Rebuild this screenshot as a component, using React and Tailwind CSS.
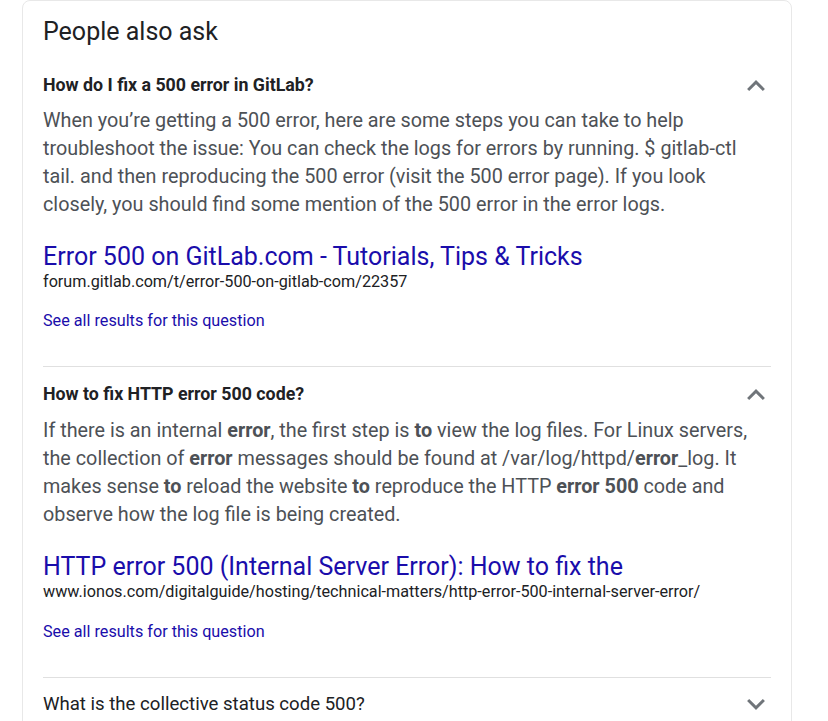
import React from "react";

function Chevron({ up }) {
  return (
    <svg width="18" height="11" viewBox="6 8 12 7.41" className={up ? "" : "rotate-180"}>
      <path d="M12 8l-6 6 1.41 1.41L12 10.83l4.59 4.58L18 14z" fill="#70757a" />
    </svg>
  );
}

function Question({ text, bold, up }) {
  return (
    <div className="flex items-center justify-between h-6">
      <span className={`leading-6 text-[#202124] ${bold ? "font-bold text-[17.8px]" : "font-normal text-[18.6px]"}`}>{text}</span>
      <span className="mr-[6px] flex items-center">
        <Chevron up={up} />
      </span>
    </div>
  );
}

export default function App() {
  const font = { fontFamily: "Roboto, 'Liberation Sans', Arial, sans-serif" };
  return (
    <div className="w-[828px] h-[721px] overflow-hidden bg-white" style={font}>
      <div className="ml-[22px] w-[770px] border border-[#e8e8e8] rounded-[8px] px-5 pt-[15px] pb-6">
        <h2 className="text-[25px] leading-8 text-[#202124] font-normal">People also ask</h2>

        <div className="mt-[25px]">
          <Question text="How do I fix a 500 error in GitLab?" bold up />
          <p className="mt-[10px] text-[19.8px] leading-[28px] text-[#4d5156]">
            When you’re getting a 500 error, here are some steps you can take to help troubleshoot the issue: You can check the logs for errors by running. $ gitlab-ctl tail. and then reproducing the 500 error (visit the 500 error page). If you look closely, you should find some mention of the 500 error in the error logs.
          </p>
          <div className="mt-[22px] text-[25px] leading-[31px] text-[#1a0dab]">Error 500 on GitLab.com - Tutorials, Tips &amp; Tricks</div>
          <div className="text-[16.2px] leading-5 text-[#202124]">forum.gitlab.com/t/error-500-on-gitlab-com/22357</div>
          <div className="mt-[19px] text-[16.2px] leading-5 text-[#1a0dab]">See all results for this question</div>
        </div>

        <div className="mt-[35px] border-t border-[#e0e0e0]" />

        <div className="mt-[15px]">
          <Question text="How to fix HTTP error 500 code?" bold up />
          <p className="mt-[11px] text-[19.8px] leading-[28px] text-[#4d5156]">
            If there is an internal <b>error</b>, the first step is <b>to</b> view the log files. For Linux servers, the collection of <b>error</b> messages should be found at /var/log/httpd/<b>error</b>_log. It makes sense <b>to</b> reload the website <b>to</b> reproduce the HTTP <b>error 500</b> code and observe how the log file is being created.
          </p>
          <div className="mt-[22px] text-[25px] leading-[31px] text-[#1a0dab]">HTTP error 500 (Internal Server Error): How to fix the</div>
          <div className="text-[16.2px] leading-5 text-[#202124]">www.ionos.com/digitalguide/hosting/technical-matters/http-error-500-internal-server-error/</div>
          <div className="mt-5 text-[16.2px] leading-5 text-[#1a0dab]">See all results for this question</div>
        </div>

        <div className="mt-[35px] border-t border-[#e0e0e0]" />

        <div className="mt-[14px]">
          <Question text="What is the collective status code 500?" />
        </div>
      </div>
    </div>
  );
}
